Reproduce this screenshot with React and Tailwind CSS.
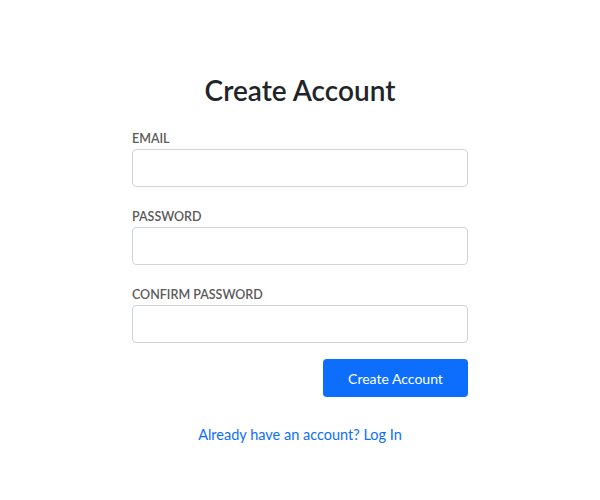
export default function App() {
    const fields = [
        { id: 'email', label: 'Email', type: 'email' },
        { id: 'password', label: 'Password', type: 'password' },
        { id: 'confirm', label: 'Confirm Password', type: 'password' },
    ];

    return (
        <div className="min-h-screen bg-white font-['Lato','Open_Sans',sans-serif]">
            <div className="mx-auto w-[336px] pt-[72px]">
                <h1 className="text-center text-[28px] leading-[36px] font-semibold text-[#212529]">
                    Create Account
                </h1>

                <form className="mt-[22px] flex flex-col gap-[21px]" onSubmit={(e) => e.preventDefault()}>
                    {fields.map((f) => (
                        <div key={f.id}>
                            <label
                                htmlFor={f.id}
                                className="block pt-[1px] text-[12.5px] leading-[15px] font-semibold uppercase text-[#5a5a5a] mb-[3px]"
                            >
                                {f.label}
                            </label>
                            <input
                                id={f.id}
                                type={f.type}
                                className="block w-full h-[38px] px-3 rounded-[4px] border border-[#ced4da] bg-white outline-none"
                            />
                        </div>
                    ))}
                </form>

                <div className="mt-[16px] flex justify-end">
                    <button
                        type="submit"
                        className="h-[38px] w-[145px] rounded-[4px] bg-[#0d6efd] text-[14px] text-white"
                    >
                        Create Account
                    </button>
                </div>

                <div className="mt-[25px] text-center">
                    <a href="#" className="text-[14.5px] leading-[20px] text-[#0d6efd]">
                        Already have an account? Log In
                    </a>
                </div>
            </div>
        </div>
    );
}
